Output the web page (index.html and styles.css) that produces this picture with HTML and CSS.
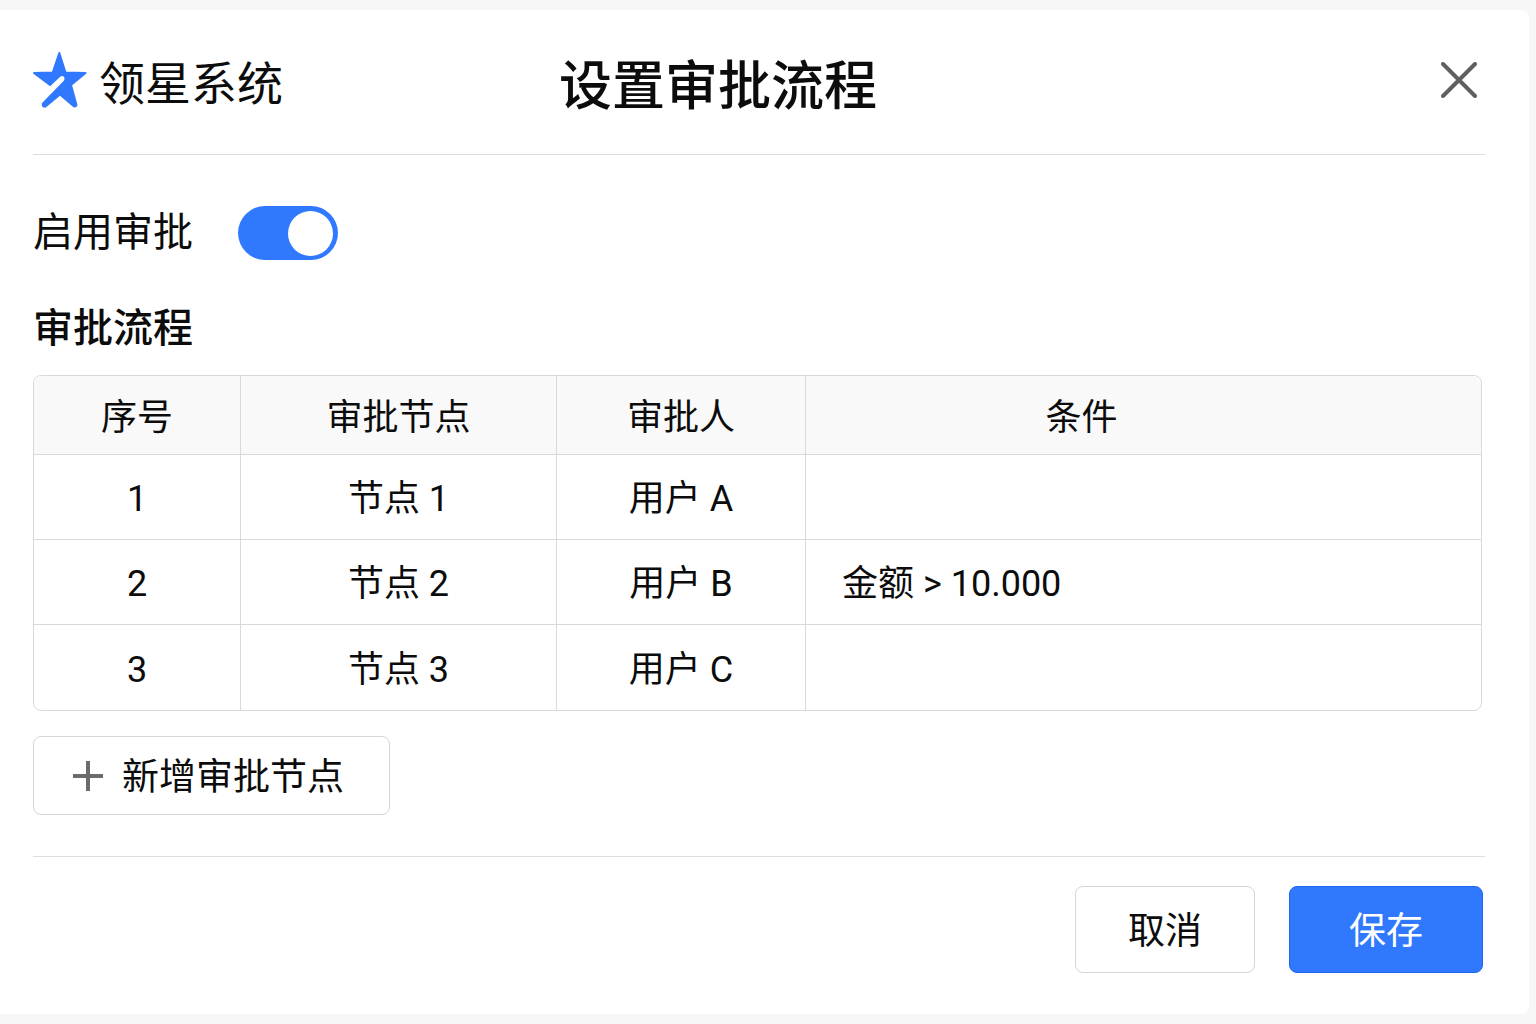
FILE: index.html
```html
<!DOCTYPE html>
<html lang="zh-CN">
<head>
    <meta charset="UTF-8">
    <meta name="viewport" content="width=device-width, initial-scale=1.0">
    <title>设置审批流程</title>
    <link rel="stylesheet" href="styles.css">
</head>
<body>
    <main class="dialog">
        <header class="header">
            <div class="brand">
                <svg class="logo" viewBox="0 0 54 58" aria-hidden="true">
                    <path d="M26.300 2 L32.500 21.500 L52.500 22 L38 34 L43.500 54 Q42.500 56 40.500 55 L27 43.500 L12.500 55.500 Q9 56 10 52.500 L31.500 30.500 Q33.500 27 31.500 25 Q29.500 23 26.500 25 L17 34 L1 22 L19.700 21.500 Z" fill="#3079fe" stroke="#3079fe" stroke-width="2" stroke-linejoin="round"/>
                </svg>
                <span class="brand-name">领星系统</span>
            </div>
            <h1 class="title">设置审批流程</h1>
            <button class="close" type="button" aria-label="关闭">
                <svg viewBox="0 0 36 36" aria-hidden="true">
                    <path d="M2 2 L34 34 M34 2 L2 34" fill="none" stroke="#606060" stroke-width="4" stroke-linecap="round"/>
                </svg>
            </button>
        </header>

        <section class="content">
            <div class="enable">
                <label for="enable">启用审批</label>
                <input class="switch" id="enable" type="checkbox" role="switch" checked>
            </div>

            <h2 class="subtitle">审批流程</h2>
            <table class="flow">
                <thead>
                    <tr>
                        <th class="col-no">序号</th>
                        <th class="col-node">审批节点</th>
                        <th class="col-user">审批人</th>
                        <th class="col-rule">条件</th>
                    </tr>
                </thead>
                <tbody>
                    <tr>
                        <td>1</td>
                        <td>节点 1</td>
                        <td>用户 A</td>
                        <td class="rule"></td>
                    </tr>
                    <tr>
                        <td>2</td>
                        <td>节点 2</td>
                        <td>用户 B</td>
                        <td class="rule">金额 &gt; 10.000</td>
                    </tr>
                    <tr>
                        <td>3</td>
                        <td>节点 3</td>
                        <td>用户 C</td>
                        <td class="rule"></td>
                    </tr>
                </tbody>
            </table>

            <button class="btn add" type="button">
                <svg class="plus" viewBox="0 0 30 30" aria-hidden="true">
                    <path d="M15 0 V30 M0 15 H30" fill="none" stroke="#6b6b6b" stroke-width="4"/>
                </svg>
                <span class="btn-text">新增审批节点</span>
            </button>
        </section>

        <footer class="footer">
            <button class="btn cancel" type="button"><span class="btn-text">取消</span></button>
            <button class="btn save" type="button"><span class="btn-text">保存</span></button>
        </footer>
    </main>
</body>
</html>
```
FILE: styles.css
```css
* {
    box-sizing: border-box;
}
body {
    margin: 0;
    min-height: 100vh;
    padding: 10px 7px 10px 0;
    display: flex;
    background: #f7f7f7;
    color: #0c0c0c;
    font-family: Roboto, "Noto Sans CJK SC", sans-serif;
    font-size: 36px;
}
button {
    font: inherit;
    color: inherit;
    cursor: pointer;
}
svg {
    display: block;
}
.dialog {
    flex: 1;
    padding: 0 44px 0 33px;
    background: #fff;
    border-radius: 0 8px 8px 0;
}

/* header */
.header {
    display: grid;
    grid-template-columns: 526px 1fr auto;
    align-items: center;
    height: 145px;
    padding: 0 8px 4px 0;
    border-bottom: 1px solid #dcdcdc;
}
.brand {
    display: flex;
    align-items: center;
    gap: 12px;
}
.logo {
    width: 54px;
    height: 58px;
}
.brand-name {
    padding-top: 8px;
    font-size: 46px;
    line-height: 60px;
}
.title {
    margin: 0;
    padding-top: 14px;
    font-size: 53px;
    line-height: 64px;
    font-weight: 500;
}
.close {
    width: 36px;
    height: 36px;
    padding: 0;
    border: 0;
    background: none;
}

/* content */
.content {
    padding: 50px 3px 41px 0;
    border-bottom: 1px solid #dfdfdf;
}
.enable {
    display: flex;
    align-items: center;
    gap: 45px;
    font-size: 40px;
    line-height: 56px;
}
.switch {
    appearance: none;
    display: flex;
    align-items: center;
    justify-content: flex-end;
    width: 100px;
    height: 54px;
    margin: 0;
    padding: 0 5px;
    border-radius: 27px;
    background: #3079fe;
    cursor: pointer;
}
.switch::before {
    content: "";
    width: 45px;
    height: 45px;
    border-radius: 50%;
    background: #fff;
}
.switch:not(:checked) {
    justify-content: flex-start;
    background: #c4c4c4;
}
.subtitle {
    margin: 40px 0 18px;
    font-size: 40px;
    line-height: 56px;
    font-weight: 500;
}

/* table */
.flow {
    width: 100%;
    table-layout: fixed;
    border: 1px solid #d9d9d9;
    border-radius: 8px;
    border-spacing: 0;
    overflow: hidden;
}
.flow th,
.flow td {
    padding: 4px 0 0;
    border-right: 1px solid #d9d9d9;
    border-bottom: 1px solid #d9d9d9;
    text-align: center;
    font-weight: 400;
    line-height: 48px;
}
.flow th {
    height: 79px;
    padding-top: 6px;
    background: #f9f9f9;
}
.flow td {
    height: 85px;
}
.flow th:last-child,
.flow td:last-child {
    border-right: 0;
}
.flow tr:last-child td {
    border-bottom: 0;
}
.col-no {
    width: 207px;
}
.col-node {
    width: 316px;
}
.col-user {
    width: 249px;
}
.flow .col-rule {
    padding-right: 124px;
}
.flow .rule {
    padding-left: 36px;
    text-align: left;
}

/* buttons */
.btn {
    border: 1px solid #d6d6d6;
    border-radius: 8px;
    background: #fff;
    font-size: 37px;
}
.btn-text {
    display: block;
    padding-bottom: 4px;
}
.add {
    display: flex;
    align-items: center;
    gap: 19px;
    height: 79px;
    margin-top: 25px;
    padding: 0 45px 0 39px;
}
.plus {
    width: 30px;
    height: 30px;
}
.footer {
    display: flex;
    justify-content: flex-end;
    gap: 34px;
    padding: 29px 2px 0 0;
}
.cancel,
.save {
    height: 87px;
}
.cancel {
    width: 180px;
}
.save {
    width: 194px;
    border-color: #1d66ee;
    background: #3079fe;
    color: #fff;
}
```
